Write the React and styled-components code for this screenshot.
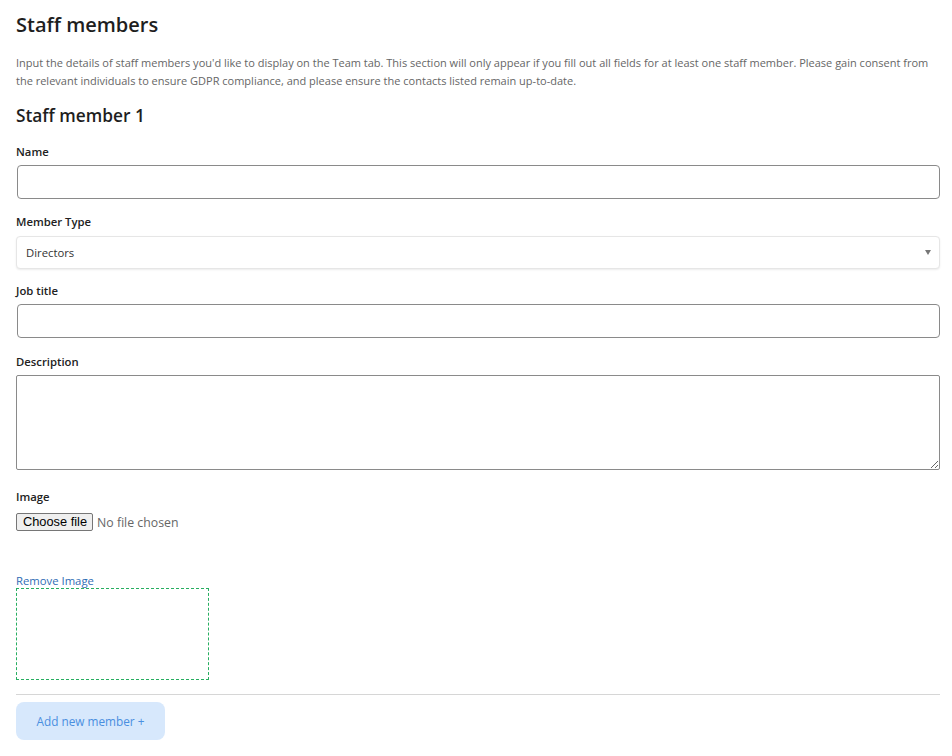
import React from 'react'
import styled, { createGlobalStyle } from 'styled-components';

const GlobalStyle = createGlobalStyle`
    body {
        margin: 0;
        background: #fff;
        font-family: "Open Sans", "Noto Sans", sans-serif;
        color: #222;
    }
`;

export default function App() {
    return (
        <>
            <GlobalStyle />
            <Page>
                <Title>Staff members</Title>
                <Intro>
                    Input the details of staff members you'd like to display on the Team tab. This section will only appear if you fill out all fields for at least one staff member. Please gain consent from the relevant individuals to ensure GDPR compliance, and please ensure the contacts listed remain up-to-date.
                </Intro>
                <SubTitle>Staff member 1</SubTitle>

                <Field>
                    <Label>Name</Label>
                    <TextInput type="text" />
                </Field>

                <Field>
                    <Label>Member Type</Label>
                    <SelectWrap>
                        <Select defaultValue="Directors">
                            <option>Directors</option>
                            <option>Staff</option>
                        </Select>
                        <Caret />
                    </SelectWrap>
                </Field>

                <Field>
                    <Label>Job title</Label>
                    <TextInput type="text" />
                </Field>

                <Field $gap={16}>
                    <Label>Description</Label>
                    <TextArea />
                </Field>

                <Field $gap={19}>
                    <Label>Image</Label>
                    <FileRow>
                        <HiddenFile type="file" id="staff-image-1" />
                        <ChooseButton htmlFor="staff-image-1">Choose file</ChooseButton>
                        <FileStatus>No file chosen</FileStatus>
                    </FileRow>
                </Field>

                <ImageBlock>
                    <RemoveLink href="#">Remove Image</RemoveLink>
                    <Preview />
                </ImageBlock>

                <Divider />
                <AddButton>Add new member +</AddButton>
            </Page>
        </>
    )
}

const Page = styled.div`
    display: flex;
    flex-direction: column;
    align-items: stretch;
    padding: 10px 12px 16px 16px;
`;

const Title = styled.h1`
    margin: 0;
    font-size: 20px;
    font-weight: 600;
    line-height: 30px;
    color: #1e1e1e;
`;

const Intro = styled.p`
    margin: 14px 0 0;
    font-size: 11px;
    line-height: 18px;
    color: #666;
`;

const SubTitle = styled.h2`
    margin: 14px 0 1px;
    font-size: 17.3px;
    font-weight: 600;
    line-height: 24px;
    color: #1e1e1e;
`;

const Field = styled.div`
    margin-top: ${p => p.$gap || 15}px;
    display: flex;
    flex-direction: column;
`;

const Label = styled.label`
    font-size: 11.3px;
    font-weight: 600;
    line-height: 16px;
    color: #222;
    margin-bottom: 5px;
`;

const TextInput = styled.input`
    box-sizing: border-box;
    height: 34px;
    margin-left: 1px;
    border: 1px solid #8a8a8a;
    border-radius: 4px;
    padding: 0 8px;
    font: inherit;
`;

const SelectWrap = styled.div`
    position: relative;
    margin: 1px 0 -1px;
`;

const Select = styled.select`
    box-sizing: border-box;
    width: 100%;
    height: 33px;
    appearance: none;
    border: 1px solid #e6e6e6;
    border-radius: 4px;
    box-shadow: 0 1px 2px rgba(0, 0, 0, 0.08);
    background: #fff;
    padding: 0 9px;
    font-family: inherit;
    font-size: 11.3px;
    color: #333;
`;

const Caret = styled.span`
    position: absolute;
    right: 9px;
    top: 14px;
    width: 0;
    height: 0;
    border-left: 3.5px solid transparent;
    border-right: 3.5px solid transparent;
    border-top: 5px solid #777;
    pointer-events: none;
`;

const TextArea = styled.textarea`
    box-sizing: border-box;
    height: 95px;
    border: 1px solid #8a8a8a;
    border-radius: 2px;
    padding: 6px 8px;
    font: inherit;
`;

const FileRow = styled.div`
    margin-top: 3px;
    display: flex;
    align-items: center;
    gap: 4px;
    font-family: "Liberation Sans", Arial, sans-serif;
    font-size: 13.33px;
`;

const HiddenFile = styled.input`
    display: none;
`;

const ChooseButton = styled.label`
    box-sizing: border-box;
    height: 18px;
    line-height: 16px;
    padding: 0 5px 0 6px;
    font-size: 12.8px;
    color: #000;
    background: #efefef;
    border: 1px solid #767676;
    border-radius: 2px;
`;

const FileStatus = styled.span`
    font-family: "Open Sans", sans-serif;
    font-size: 12.3px;
    color: #666;
`;

const ImageBlock = styled.div`
    margin-top: 43px;
    display: flex;
    flex-direction: column;
    align-items: flex-start;
`;

const RemoveLink = styled.a`
    font-size: 11.3px;
    line-height: 14px;
    color: #2f6db5;
    text-decoration: none;
`;

const Preview = styled.div`
    box-sizing: border-box;
    width: 193px;
    height: 92px;
    border: 1px dashed #27ae60;
`;

const Divider = styled.hr`
    width: 100%;
    margin: 14px 0 0;
    border: none;
    border-top: 1px solid #d6d6d6;
`;

const AddButton = styled.button`
    align-self: flex-start;
    margin-top: 7px;
    width: 149px;
    height: 38px;
    border: none;
    border-radius: 8px;
    background: #d7e8fc;
    color: #4a8fe0;
    font-family: inherit;
    font-size: 11.8px;
    font-weight: 500;
`;
